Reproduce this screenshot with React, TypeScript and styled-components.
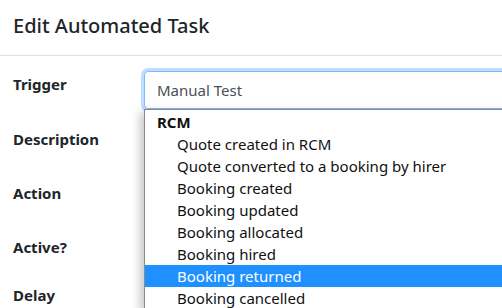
import React from 'react';
import styled, { createGlobalStyle } from 'styled-components';

const TRIGGERS = [
  { group: 'RCM', options: [
    'Quote created in RCM',
    'Quote converted to a booking by hirer',
    'Booking created',
    'Booking updated',
    'Booking allocated',
    'Booking hired',
    'Booking returned',
    'Booking cancelled',
  ] },
];

const HOVERED = 'Booking returned';

const FIELDS = [
  { label: 'Trigger', height: 55 },
  { label: 'Description', height: 54 },
  { label: 'Action', height: 54 },
  { label: 'Active?', height: 48 },
  { label: 'Delay', height: 40 },
];

// COMPONENT
export default function App() {
  return (
    <>
      <GlobalStyle />
      <Modal>
        <Header>
          <Title>Edit Automated Task</Title>
        </Header>
        <Body>
          {FIELDS.map(({ label, height }) => (
            <Row key={label} $h={height}>
              <Label>{label}</Label>
              <Control>
                {label === 'Trigger' && (
                  <SelectWrap>
                    <Select>Manual Test</Select>
                    <Menu>
                      {TRIGGERS.map(({ group, options }) => (
                        <React.Fragment key={group}>
                          <Group>{group}</Group>
                          {options.map(o => (
                            <Option key={o} $active={o === HOVERED}>{o}</Option>
                          ))}
                        </React.Fragment>
                      ))}
                    </Menu>
                  </SelectWrap>
                )}
              </Control>
            </Row>
          ))}
        </Body>
      </Modal>
    </>
  );
}

// STYLING
const GlobalStyle = createGlobalStyle`
  html, body {
    margin: 0;
    background: #fff;
    overflow: hidden;
  }
  body {
    font-family: "Segoe UI", "Noto Sans", sans-serif;
    color: #212529;
  }
`;
const Modal = styled.div`
  width: 502px;
  height: 308px;
  overflow: hidden;
`;
const Header = styled.div`
  height: 56px;
  box-sizing: border-box;
  padding: 11px 13px 0;
  border-bottom: 1px solid #d6e2ec;
`;
const Title = styled.h5`
  margin: 0;
  font-size: 20px;
  font-weight: 500;
  line-height: 30px;
`;
const Body = styled.div`
  padding: 15px 0 0 13px;
`;
const Row = styled.div<{ $h: number }>`
  display: grid;
  grid-template-columns: 131px 1fr;
  height: ${p => p.$h}px;
`;
const Label = styled.div`
  font-size: 15px;
  font-weight: 700;
  line-height: 22px;
  padding-top: 2px;
`;
const Control = styled.div`
  position: relative;
`;
const SelectWrap = styled.div`
  position: relative;
  z-index: 5;
`;
const Select = styled.div`
  height: 38px;
  width: 400px;
  box-sizing: border-box;
  border: 1px solid #80bdff;
  border-radius: 4px;
  box-shadow: 0 0 0 3px rgba(0, 123, 255, 0.25);
  padding: 0 12px;
  font-size: 15px;
  line-height: 37px;
  color: #495057;
  background: #fff;
`;
const Menu = styled.div`
  position: absolute;
  top: 38px;
  left: 0;
  width: 420px;
  background: #fff;
  border: 1px solid #8a8a8a;
  padding-top: 1px;
  box-shadow: -4px 3px 9px rgba(0, 0, 0, 0.22);
  font-size: 15px;
  color: #111;
`;
const Group = styled.div`
  height: 22px;
  line-height: 22px;
  padding-left: 12px;
  font-weight: 700;
`;
const Option = styled.div<{ $active: boolean }>`
  height: 22px;
  line-height: 22px;
  padding-left: 32px;
  background: ${p => (p.$active ? '#1e90ff' : 'transparent')};
  color: ${p => (p.$active ? '#fff' : '#111')};
`;
